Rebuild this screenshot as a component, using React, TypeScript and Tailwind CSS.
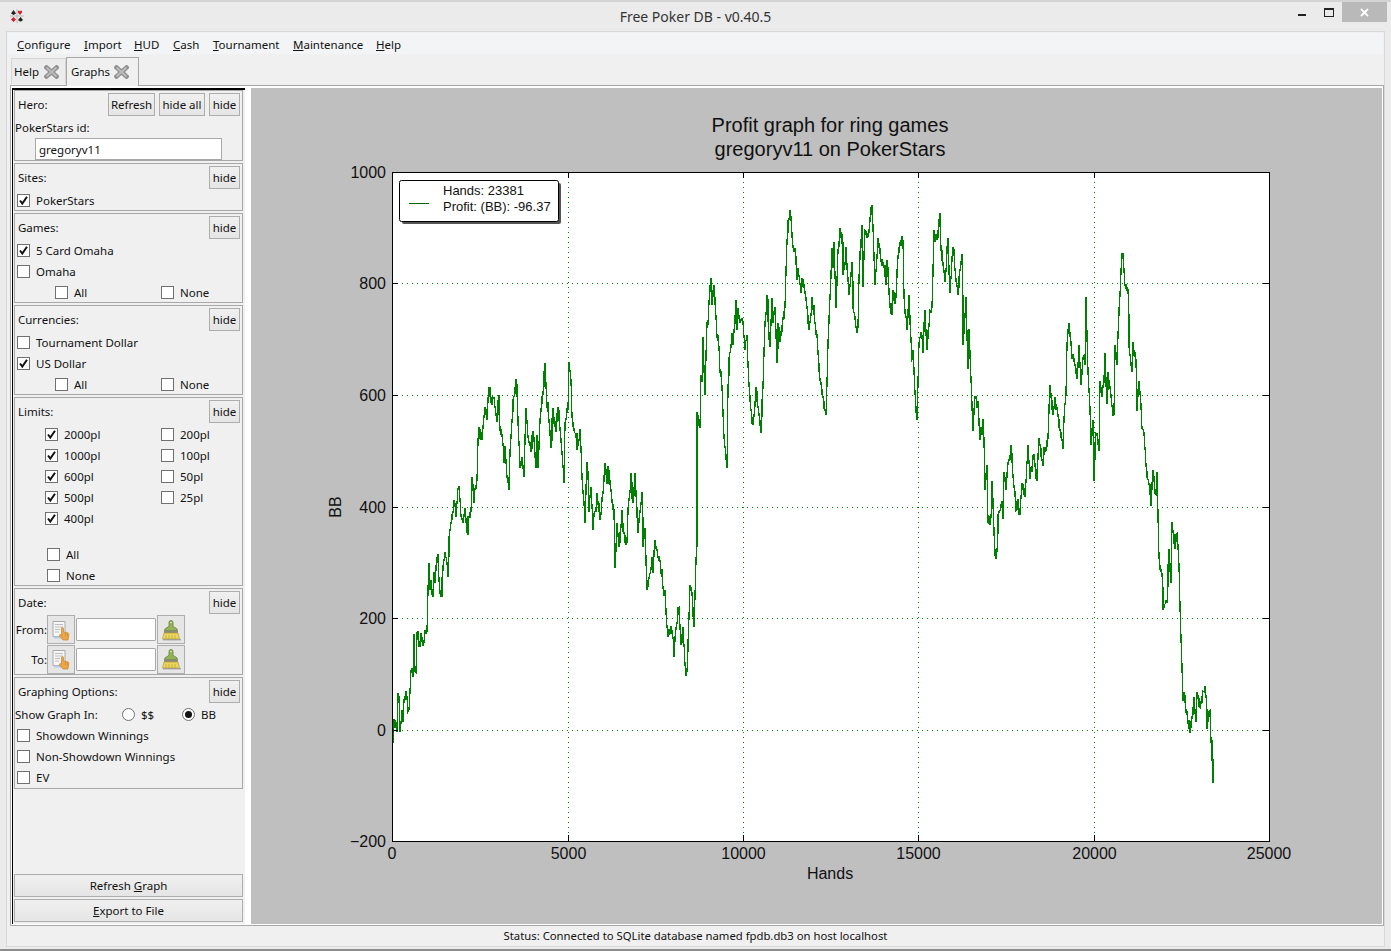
import type { ReactNode } from 'react'

// points traced off the reference, [x, y] in crop pixels of three zoomed regions
const traceA = [[38,1150],[40,1105],[48,1085],[50,1115],[53,1000],[57,1010],[60,1115],[65,1050],[70,1085],[72,1020],[80,1010],[84,1055],[88,1050],[90,995],[92,930],[98,950],[101,822],[104,935],[108,940],[110,815],[120,860],[125,830],[132,850],[135,810],[142,815],[143,690],[146,610],[150,690],[153,660],[158,710],[161,635],[165,670],[170,595],[175,600],[176,660],[180,700],[185,712],[186,655],[192,600],[196,575],[200,610],[203,652],[208,530],[212,490],[218,460],[222,420],[228,470],[233,385],[238,378],[243,470],[250,490],[254,445],[260,520],[265,470],[272,455],[275,350],[282,430],[285,385],[292,360],[295,240],[297,200],[303,240],[310,200],[314,140],[320,180],[326,82],[332,130],[340,110],[345,140],[350,185],[358,105],[360,210],[365,225],[372,310],[376,258],[382,350],[387,390],[390,275],[395,182],[400,120],[407,58],[412,100],[420,325],[425,290],[431,350],[437,145],[443,230],[452,275],[460,212],[468,325],[470,225],[475,325],[480,180],[488,100],[496,8],[500,145],[505,150],[512,265],[520,145],[528,215],[533,140],[540,205],[545,280],[548,320],[553,370],[556,190],[564,150],[568,5],[572,60],[575,170],[580,200],[590,220],[592,270],[600,208],[605,350],[608,395],[612,430],[616,490],[622,305],[625,340],[628,455],[634,380],[640,510],[650,400],[660,480],[668,400],[675,310],[680,370],[688,330],[694,390],[702,450],[706,625],[712,490],[716,560],[725,450],[732,520],[742,550],[745,450],[752,340],[760,430],[765,340],[775,520],[785,395],[790,560],[795,505],[802,690],[808,655],[815,590],[820,640],[825,540],[833,590],[840,600],[848,685],[855,690],[860,800],[865,830],[872,800],[878,835],[883,890],[888,805],[898,745],[902,855],[908,800],[914,915],[921,937],[926,770],[930,675],[936,700],[943,800],[948,600]]
const traceB = [[50,1065],[52,665],[60,715],[62,555],[66,575],[70,440],[75,615],[80,400],[85,400],[88,335],[94,265],[97,345],[103,285],[108,380],[112,440],[118,470],[120,545],[127,590],[128,670],[132,740],[140,835],[143,590],[148,505],[155,430],[160,460],[167,330],[170,420],[175,355],[180,400],[188,395],[195,480],[200,435],[204,525],[208,585],[213,660],[220,705],[227,590],[235,650],[242,730],[250,590],[255,400],[260,315],[265,390],[270,470],[275,325],[280,400],[285,350],[290,518],[295,400],[300,455],[308,385],[315,350],[320,150],[325,90],[332,85],[338,170],[345,175],[350,270],[355,235],[362,310],[370,270],[380,350],[388,420],[395,320],[405,400],[410,435],[414,490],[420,570],[428,620],[438,675],[445,460],[450,320],[455,175],[460,235],[463,155],[468,355],[473,180],[480,115],[488,160],[490,255],[497,170],[507,315],[515,215],[520,355],[527,410],[535,410],[536,260],[545,105],[550,290],[555,120],[565,140],[576,45],[580,110],[585,285],[595,145],[603,215],[610,215],[617,285],[622,210],[630,350],[635,375],[640,300],[648,320],[655,200],[660,160],[668,150],[672,320],[680,420],[687,315],[695,510],[700,480],[705,610],[712,690],[718,460],[722,425],[728,490],[735,360],[742,480],[750,360],[757,350],[762,120],[770,150],[780,70],[783,180],[795,275],[803,145],[810,310],[820,170],[825,240],[833,315],[838,260],[845,195]]
const traceC = [[5,40],[10,295],[18,160],[23,360],[28,250],[33,390],[40,535],[45,440],[55,450],[60,560],[68,500],[72,560],[75,700],[80,630],[83,790],[92,775],[97,675],[105,880],[110,870],[115,770],[125,730],[130,780],[132,650],[138,700],[145,625],[152,575],[160,660],[167,760],[175,725],[180,770],[187,680],[195,720],[203,575],[210,670],[222,600],[232,675],[238,555],[245,620],[258,590],[265,555],[270,405],[280,490],[285,440],[295,490],[305,560],[310,585],[312,500],[318,430],[322,290],[327,233],[335,330],[345,350],[352,390],[358,295],[362,405],[368,330],[375,350],[378,160],[385,370],[392,575],[398,505],[403,675],[407,540],[418,590],[420,395],[427,440],[434,315],[440,460],[445,370],[455,465],[462,490],[465,295],[470,350],[473,265],[480,155],[485,40],[490,38],[494,130],[503,140],[508,300],[515,370],[520,285],[528,335],[532,480],[538,395],[545,530],[552,540],[558,630],[565,670],[572,745],[578,645],[588,715],[592,650],[596,890],[605,935],[610,1035],[620,1015],[628,865],[633,960],[637,790],[645,865],[650,820],[657,910],[660,1025],[665,1195],[668,1290],[673,1265],[685,1355],[690,1380],[695,1335],[702,1280],[708,1350],[712,1265],[720,1310],[730,1262],[737,1275],[742,1370],[750,1315],[752,1405],[757,1450]]

function buildProfitLine() {
  const pts = [
    ...traceA.map(([x, y]) => [380 + x / 3, 360 + y / 3]),
    ...traceB.map(([x, y]) => [680 + x / 3, 190 + y / 3]),
    ...traceC.map(([x, y]) => [960 + x / 3, 240 + y / 2.8]),
  ]
  let seed = 17
  const rand = () => {
    seed = (seed * 16807) % 2147483647
    return seed / 2147483647 - 0.5
  }
  const out: string[] = []
  for (let i = 0; i < pts.length - 1; i++) {
    const [x0, y0] = pts[i]
    const [x1, y1] = pts[i + 1]
    const steps = Math.max(1, Math.round(x1 - x0))
    out.push(`${Math.round(x0)},${Math.round(y0)}`)
    for (let s = 1; s < steps; s++) {
      const t = s / steps
      const y = y0 + (y1 - y0) * t + rand() * 7
      const x = Math.round(x0 + (x1 - x0) * t)
      out.push(`${x},${Math.round(y)}`, `${x},${Math.round(y + rand() * 14)}`, `${x},${Math.round(y + rand() * 8)}`)
    }
  }
  out.push('1212,740', '1212,760', '1213,760', '1213,783')
  return out.join(' ')
}

const profitLine = buildProfitLine()

const yTicks = [
  { y: 172, label: '1000' },
  { y: 283.5, label: '800' },
  { y: 395.5, label: '600' },
  { y: 507.5, label: '400' },
  { y: 618.5, label: '200' },
  { y: 730.5, label: '0' },
  { y: 841, label: '−200' },
]
const xTicks = [
  { x: 392, label: '0' },
  { x: 568.5, label: '5000' },
  { x: 743.5, label: '10000' },
  { x: 918.5, label: '15000' },
  { x: 1094.5, label: '20000' },
  { x: 1269, label: '25000' },
]

function ProfitChart() {
  return (
    <svg viewBox="251 88 1131 837" className="block h-[837px] w-[1131px]" fontFamily="'Liberation Sans', Arial, sans-serif" fill="#111">
      <rect x="392.5" y="172.5" width="877" height="669" fill="#fff" />
      {yTicks.slice(1, -1).map((t) => (
        <line key={t.y} x1="392" x2="1269" y1={t.y} y2={t.y} stroke="#008000" strokeDasharray="1 4" shapeRendering="crispEdges" />
      ))}
      {xTicks.slice(1, -1).map((t) => (
        <line key={t.x} x1={t.x} x2={t.x} y1="172" y2="841" stroke="#008000" strokeDasharray="1 4" shapeRendering="crispEdges" />
      ))}
      <polyline points={profitLine} fill="none" stroke="#008000" strokeWidth="1.3" shapeRendering="crispEdges" />
      <rect x="392.5" y="172.5" width="877" height="669" fill="none" stroke="#000" shapeRendering="crispEdges" />
      {yTicks.map((t) => (
        <g key={t.label} shapeRendering="crispEdges">
          <line x1="392" x2="398" y1={t.y} y2={t.y} stroke="#000" />
          <line x1="1263" x2="1269" y1={t.y} y2={t.y} stroke="#000" />
        </g>
      ))}
      {xTicks.map((t) => (
        <g key={t.label} shapeRendering="crispEdges">
          <line x1={t.x} x2={t.x} y1="172" y2="178" stroke="#000" />
          <line x1={t.x} x2={t.x} y1="835" y2="841" stroke="#000" />
        </g>
      ))}
      {yTicks.map((t) => (
        <text key={t.label} x="386" y={t.y + 5.5} textAnchor="end" fontSize="16">{t.label}</text>
      ))}
      {xTicks.map((t) => (
        <text key={t.label} x={t.x} y="859" textAnchor="middle" fontSize="16">{t.label}</text>
      ))}
      <text x="830" y="132" textAnchor="middle" fontSize="20">Profit graph for ring games</text>
      <text x="830" y="156" textAnchor="middle" fontSize="20">gregoryv11 on PokerStars</text>
      <text x="830" y="879" textAnchor="middle" fontSize="16">Hands</text>
      <text x="341" y="507" textAnchor="middle" fontSize="16" transform="rotate(-90 341 507)">BB</text>

      <rect x="402" y="183" width="159" height="41" rx="2" fill="#555" />
      <rect x="399.5" y="180.5" width="159" height="41" rx="2" fill="#fff" stroke="#000" />
      <line x1="409" x2="429" y1="203.5" y2="203.5" stroke="#006400" shapeRendering="crispEdges" />
      <text x="443" y="195" fontSize="13">Hands: 23381</text>
      <text x="443" y="211" fontSize="13">Profit: (BB): -96.37</text>
    </svg>
  )
}

function AppIcon() {
  return (
    <svg width="14" height="14" viewBox="0 0 14 14">
      <path d="M3.500 1 6 4.500 3.500 6 1 4.500Z" fill="#222" />
      <path d="M10 2.500C9 .5 7.500 2 8 3.500L10 6l2-2.500c.5-1.500-1-3-2-1Z" fill="#d3202a" />
      <path d="M3.500 8 6 10.500 3.500 13 1 10.500Z" fill="#d3202a" />
      <path d="M10.500 8 13 11l-2 1.500h-1L8 11Z" fill="#222" />
      <path d="M7 0v14M0 7h14" stroke="#9a9a9a" strokeWidth=".6" />
    </svg>
  )
}

function TabClose({ className = '' }: { className?: string }) {
  return (
    <svg width="15" height="14" viewBox="0 0 15 14" className={className}>
      <path d="M2.500 2.500 12.500 11.500M12.500 2.500 2.500 11.500" stroke="#8f8f8f" strokeWidth="4.400" strokeLinecap="square" />
      <path d="M2.500 2.500 12.500 11.500M12.500 2.500 2.500 11.500" stroke="#bdbdbd" strokeWidth="1.800" />
    </svg>
  )
}

function PickIcon() {
  return (
    <svg width="20" height="22" viewBox="0 0 20 22">
      <path d="M2 2.500h12v15H2Z" fill="#f6f6f6" stroke="#a9a9a9" />
      <path d="M4 5.500h8M4 8h8M4 10.500h5M4 13h4" stroke="#bdbdbd" />
      <path d="M3 18.500h9" stroke="#b4cde6" strokeWidth="2" />
      <path d="M12 21c-1.500-1.500-3-3-3.500-4.500-.3-1 1-1.300 2-.3V9.500c0-1.300 2-1.300 2 0V13l4 .7c1 .2 1.500 1 1.300 2L17 21Z" fill="#eaa648" stroke="#c8842c" strokeWidth=".7" />
      <path d="M14.500 14v3M16.500 14.500v3" stroke="#c8842c" strokeWidth=".6" />
    </svg>
  )
}

function BrushIcon() {
  return (
    <svg width="20" height="22" viewBox="0 0 20 22">
      <path d="M8 7V3.500a2 2 0 0 1 4 0V7c0 1.500 4.500 1.500 4.500 4.500h-13C3.500 8.500 8 8.500 8 7Z" fill="#93b35a" stroke="#64822f" strokeWidth=".8" />
      <circle cx="10" cy="3.500" r=".8" fill="#e6efcf" />
      <rect x="3" y="11.500" width="14" height="2.500" fill="#8b8b7a" />
      <path d="M3 14h14l1.500 6h-17Z" fill="#ecd65f" stroke="#b49c30" strokeWidth=".7" />
      <path d="M5 16v4M8 16v4M11 16v4M14 16v4" stroke="#b49c30" strokeWidth=".6" />
      <path d="M2 20.800h18" stroke="#8a8a8a" />
    </svg>
  )
}

function Btn({ children, className = '' }: { children: ReactNode; className?: string }) {
  return (
    <button className={`flex h-[23px] items-center justify-center border border-[#adadad] bg-gradient-to-b from-[#f0f0f0] to-[#e5e5e5] ${className}`}>
      {children}
    </button>
  )
}

function Check({ label, checked = false, className = '' }: { label: string; checked?: boolean; className?: string }) {
  return (
    <div className={`flex h-[21px] items-center ${className}`}>
      <span className="flex h-[13px] w-[13px] shrink-0 items-center justify-center border border-[#707070] bg-white">
        {checked && (
          <svg width="11" height="11" viewBox="0 0 11 11">
            <path d="M2 5.500 4.300 8.500 9 1.800" fill="none" stroke="#111" strokeWidth="2" />
          </svg>
        )}
      </span>
      <span className="ml-[6px] whitespace-nowrap">{label}</span>
    </div>
  )
}

function Radio({ label, checked = false, className = '' }: { label: string; checked?: boolean; className?: string }) {
  return (
    <div className={`flex items-center ${className}`}>
      <span className="flex h-[13px] w-[13px] items-center justify-center rounded-full border border-[#707070] bg-white">
        {checked && <span className="h-[7px] w-[7px] rounded-full bg-[#111]" />}
      </span>
      <span className="ml-[6px]">{label}</span>
    </div>
  )
}

function Section({ title, children, height, extra }: { title: string; children: ReactNode; height: string; extra?: ReactNode }) {
  return (
    <section className={`mb-[2px] flex flex-col border border-[#a8a8a8] ${height}`}>
      <div className="mt-[2px] flex h-[24px] shrink-0 items-start justify-between pr-[2px] pl-[3px]">
        <span className="leading-[23px]">{title}</span>
        <div className="flex gap-1">
          {extra}
          <Btn className="w-[31px]">hide</Btn>
        </div>
      </div>
      {children}
    </section>
  )
}

function AllNone() {
  return (
    <div className="flex pl-[40px]">
      <Check label="All" className="w-[106px]" />
      <Check label="None" />
    </div>
  )
}

function DateRow({ label }: { label: string }) {
  return (
    <div className="flex h-[30px] items-center">
      <span className="w-[32px] text-right">{label}</span>
      <button className="flex h-[29px] w-[28px] items-center justify-center border border-[#adadad] bg-[#e6e6e6]">
        <PickIcon />
      </button>
      <span className="mx-[1px] h-[23px] w-[80px] rounded-[1px] border border-[#a8a8a8] bg-white" />
      <button className="flex h-[29px] w-[28px] items-center justify-center border border-[#adadad] bg-[#e6e6e6]">
        <BrushIcon />
      </button>
    </div>
  )
}

function Sidebar() {
  const limitsLeft = ['2000pl', '1000pl', '600pl', '500pl', '400pl']
  const limitsRight = ['200pl', '100pl', '50pl', '25pl']
  return (
    <aside className="flex w-[233px] shrink-0 flex-col border-t-2 border-l border-black bg-[#f0f0f0] pr-[2px] pl-[1px]">
      <Section
        title="Hero:"
        height="h-[71px]"
        extra={
          <>
            <Btn className="w-[47px]">Refresh</Btn>
            <Btn className="w-[46px]">hide all</Btn>
          </>
        }
      >
        <div className="mt-[2px] h-[19px] leading-[18px]">PokerStars id:</div>
        <div className="ml-[20px] flex h-[22px] w-[187px] items-center border border-[#a8a8a8] bg-white px-[3px] pt-px">gregoryv11</div>
      </Section>
      <Section title="Sites:" height="h-[48px]">
        <div className="pl-[2px]"><Check label="PokerStars" checked /></div>
      </Section>
      <Section title="Games:" height="h-[90px]">
        <div className="pl-[2px]">
          <Check label="5 Card Omaha" checked />
          <Check label="Omaha" />
        </div>
        <AllNone />
      </Section>
      <Section title="Currencies:" height="h-[90px]">
        <div className="pl-[2px]">
          <Check label="Tournament Dollar" />
          <Check label="US Dollar" checked />
        </div>
        <AllNone />
      </Section>
      <Section title="Limits:" height="h-[189px]">
        <div className="flex pl-[30px]">
          <div className="w-[116px]">
            {limitsLeft.map((l) => <Check key={l} label={l} checked />)}
          </div>
          <div>
            {limitsRight.map((l) => <Check key={l} label={l} />)}
          </div>
        </div>
        <div className="mt-[15px] pl-[32px]">
          <Check label="All" />
          <Check label="None" />
        </div>
      </Section>
      <Section title="Date:" height="h-[87px]">
        <DateRow label="From:" />
        <DateRow label="To:" />
      </Section>
      <Section title="Graphing Options:" height="h-[112px]">
        <div className="flex h-[21px] items-center">
          <span className="w-[107px]">Show Graph In:</span>
          <Radio label="$$" className="w-[60px]" />
          <Radio label="BB" checked />
        </div>
        <div className="pl-[2px]">
          <Check label="Showdown Winnings" />
          <Check label="Non-Showdown Winnings" />
          <Check label="EV" />
        </div>
      </Section>
      <div className="mt-auto flex flex-col gap-[2px] pb-[2px]">
        <Btn className="w-full"><span>Refresh <u>G</u>raph</span></Btn>
        <Btn className="w-full"><span><u>E</u>xport to File</span></Btn>
      </div>
    </aside>
  )
}

const menus = [
  { first: 'C', rest: 'onfigure', w: 'w-[67px]' },
  { first: 'I', rest: 'mport', w: 'w-[50px]' },
  { first: 'H', rest: 'UD', w: 'w-[39px]' },
  { first: 'C', rest: 'ash', w: 'w-[40px]' },
  { first: 'T', rest: 'ournament', w: 'w-[80px]' },
  { first: 'M', rest: 'aintenance', w: 'w-[83px]' },
  { first: 'H', rest: 'elp', w: 'w-[40px]' },
]

export default function App() {
  return (
    <div className="flex h-[951px] w-[1391px] flex-col overflow-hidden border-t-2 border-b-2 border-t-[#d4d4d4] border-b-[#8c8c8c] bg-[#ebebeb] font-['Noto_Sans',Tahoma,sans-serif] text-[11.5px] text-[#111]">
      <header className="grid h-[29px] shrink-0 grid-cols-[1fr_auto_1fr] items-start">
        <div className="mt-[7px] ml-[10px]"><AppIcon /></div>
        <div className="mt-[5px] text-center text-[14px] leading-[20px] text-[#333]">Free Poker DB - v0.40.5</div>
        <div className="mr-[4px] flex items-start justify-end">
          <span className="mt-[12px] h-[2px] w-[8px] bg-[#222]" />
          <span className="mt-[6px] ml-[18px] h-[9px] w-[10px] border border-t-2 border-[#222]" />
          <span className="ml-[8px] flex h-[20px] w-[45px] items-center justify-center bg-[#b9b9b9]">
            <svg width="9" height="9" viewBox="0 0 9 9">
              <path d="M1 1 8 8M8 1 1 8" stroke="#fff" strokeWidth="1.800" />
            </svg>
          </span>
        </div>
      </header>
      <main className="mx-[6px] mb-[2px] flex min-h-0 flex-1 flex-col border border-[#d8d8d8] bg-[#f0f0f0]">
        <nav className="mx-px mt-px flex h-[21px] shrink-0 items-center bg-[#f3f4f6] pt-[2px] pl-[9px]">
          {menus.map((m) => (
            <span key={m.rest} className={m.w}><u>{m.first}</u>{m.rest}</span>
          ))}
        </nav>
        <div className="flex h-[31px] shrink-0 items-end pl-[4px]">
          <div className="mb-px flex h-[26px] w-[55px] items-center border border-b-0 border-[#d4d4d4] bg-[#ececec] pt-px pl-[2px]">
            Help<TabClose className="ml-[5px]" />
          </div>
          <div className="z-10 -mb-px flex h-[29px] w-[73px] items-center border border-b-0 border-[#a8a8a8] bg-[#f0f0f0] pl-[4px]">
            Graphs<TabClose className="ml-[4px]" />
          </div>
        </div>
        <div className="ml-[3px] flex h-[841px] w-[1374px] shrink-0 border border-[#a8a8a8] bg-white p-px pt-[2px] pb-[1px]">
          <Sidebar />
          <div className="ml-[6px] min-w-0 flex-1 bg-[#bfbfbf]">
            <ProfitChart />
          </div>
        </div>
        <footer className="flex flex-1 items-center justify-center text-[11.3px]">
          Status: Connected to SQLite database named fpdb.db3 on host localhost
        </footer>
      </main>
    </div>
  )
}
